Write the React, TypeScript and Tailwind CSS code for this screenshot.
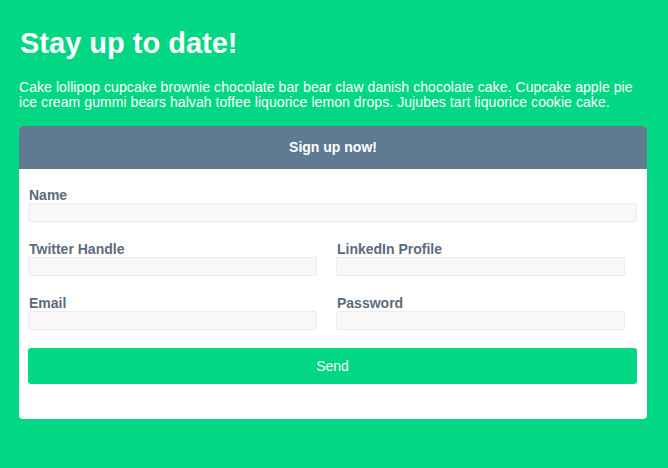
const Field = ({ label, className }: { label: string; className: string }) => (
    <div className="flex flex-col">
        <label className="text-[14px] leading-[16px] font-bold text-[#5b6b7c] pl-px">{label}</label>
        <input type="text" className={`h-[19px] bg-[#f8f8f8] border border-[#ececec] rounded-[2px] ${className}`} />
    </div>
)

const App = () => {
    return (
        <div className="min-h-[468px] w-full bg-[#02d883] px-[19px] pt-[27px] pb-10 font-['Liberation_Sans',Arial,sans-serif]">
            <h1 className="text-[29px] leading-[32px] font-bold text-white pl-px">Stay up to date!</h1>
            <p className="mt-[21px] text-[14px] leading-[15px] tracking-[0.07px] text-white">
                Cake lollipop cupcake brownie chocolate bar bear claw danish chocolate cake. Cupcake apple pie ice cream gummi bears halvah toffee liquorice lemon drops. Jujubes tart liquorice cookie cake.
            </p>
            <div className="mt-[16px] w-[628px] rounded-[4px] overflow-hidden bg-white">
                <div className="h-[43px] bg-[#5f7b92] flex items-center justify-center text-white text-[14px] font-bold">
                    Sign up now!
                </div>
                <form className="pl-[9px] pr-[10px] pt-[18px] pb-[35px] flex flex-col gap-[19px]" onSubmit={e => e.preventDefault()}>
                    <Field label="Name" className="w-full" />
                    <div className="grid grid-cols-[308px_301px]">
                        <Field label="Twitter Handle" className="w-[289px]" />
                        <Field label="LinkedIn Profile" className="w-[289px]" />
                    </div>
                    <div className="grid grid-cols-[308px_301px]">
                        <Field label="Email" className="w-[289px]" />
                        <Field label="Password" className="w-[289px]" />
                    </div>
                    <button type="submit" className="-mt-px h-[36px] w-full rounded-[3px] bg-[#02d883] text-white text-[14px]">Send</button>
                </form>
            </div>
        </div>
    )
}

export default App
